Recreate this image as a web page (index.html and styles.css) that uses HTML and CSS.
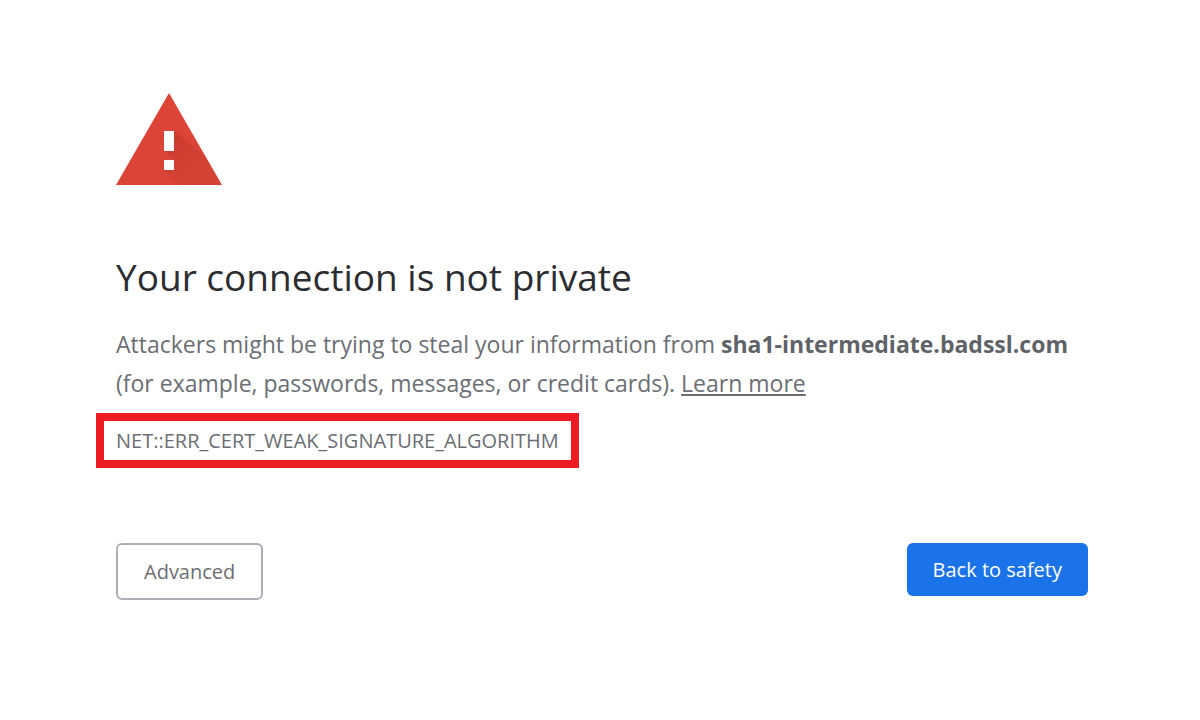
FILE: index.html
```
<!DOCTYPE html>
<html lang="en">
<head>
  <meta charset="UTF-8">
  <meta name="viewport" content="width=device-width, initial-scale=1">
  <title>Privacy error</title>
  <link rel="stylesheet" href="styles.css">
</head>
<body>

<main class="interstitial">
  <svg class="icon" viewBox="0 0 106 92" aria-hidden="true">
    <defs>
      <linearGradient id="shadow" gradientUnits="userSpaceOnUse" x1="52" y1="50" x2="76" y2="74">
        <stop offset="0" stop-color="#b93228" stop-opacity="0.5"/>
        <stop offset="1" stop-color="#b93228" stop-opacity="0.15"/>
      </linearGradient>
    </defs>
    <path fill="#db4437" d="M53 0L106 92H0z"/>
    <path fill="url(#shadow)" d="M58 38L90 64L106 92H62L48 78L58 67L48 58z"/>
    <path fill="#fff" d="M48 38h10v20H48zM48 67h10v10H48z"/>
  </svg>

  <h1>Your connection is not private</h1>

  <p class="message">
    Attackers might be trying to steal your information from <strong>sha1-intermediate.badssl.com</strong>
    (for example, passwords, messages, or credit cards). <a href="#">Learn more</a>
  </p>

  <div class="error-code">NET::ERR_CERT_WEAK_SIGNATURE_ALGORITHM</div>

  <div class="buttons">
    <button type="button" class="details-button">Advanced</button>
    <button type="button" class="primary-button">Back to safety</button>
  </div>
</main>

</body>
</html>
```
FILE: styles.css
```
body {
  margin: 0;
  background: #fff;
  color: #6b6e73;
  font-family: "Open Sans", "Noto Sans", sans-serif;
}

.interstitial {
  max-width: 972px;
  margin: 0 auto;
  padding: 93px 112px 0 116px;
}

.icon {
  display: block;
  width: 106px;
  height: 92px;
}

h1 {
  margin: 67px 0 23px;
  color: #2b2d31;
  font-size: 37px;
  font-weight: 400;
  line-height: 50px;
}

.message {
  margin: 0;
  font-size: 23px;
  line-height: 39px;
}

.message strong {
  color: #5f6368;
}

.message a {
  color: inherit;
}

.error-code {
  width: fit-content;
  margin: 10px 0 0 -20px;
  padding: 4px 12px;
  border: 8px solid #ed1c24;
  font-size: 20px;
  line-height: 31px;
}

.buttons {
  display: flex;
  align-items: flex-start;
  justify-content: space-between;
  margin-top: 75px;
}

button {
  padding: 0 26px;
  border-radius: 6px;
  font-family: inherit;
  font-size: 20px;
  cursor: pointer;
}

.details-button {
  height: 57px;
  border: 2px solid #adafb8;
  background: #fff;
  color: #6b6e73;
}

.primary-button {
  height: 53px;
  border: none;
  background: #1a73e8;
  color: #fff;
}
```
